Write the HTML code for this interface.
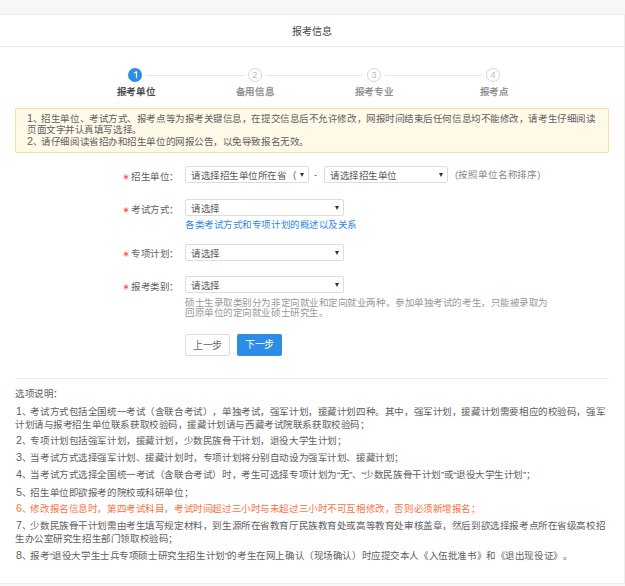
<!DOCTYPE html>
<html lang="zh-CN">
<head>
<meta charset="utf-8">
<style>
html,body{margin:0;padding:0;}
body{width:625px;height:586px;overflow:hidden;background:#f7f7f7;position:relative;font-family:"Liberation Sans",sans-serif;font-size:9.5px;letter-spacing:-0.45px;color:#555;text-spacing-trim:space-all;}
.o,.lab{color:#606060;}
.a{position:absolute;white-space:nowrap;line-height:12px;}
#panel{position:absolute;left:-1px;top:14px;width:626px;height:570px;background:#fff;border:1px solid #ededed;box-sizing:border-box;}
.hline{position:absolute;height:1px;background:#eaeaea;}
.circ{position:absolute;width:14px;height:14px;border-radius:50%;box-sizing:border-box;text-align:center;line-height:14px;font-size:10px;}
.c-on{background:#2d8ce6;color:#fff;}
.c-off{border:1px solid #d6d6d6;color:#bdbdbd;line-height:12px;font-size:9.5px;letter-spacing:0;}
.sline{position:absolute;height:1px;background:#e6e6e6;top:75px;}
.slab{position:absolute;top:85px;width:60px;text-align:center;color:#888;-webkit-text-stroke:0.25px #888;line-height:14px;}
#notice{position:absolute;left:15px;top:108px;width:594px;height:45px;box-sizing:border-box;background:#fff9e8;border:1px solid #fcdc9c;border-radius:2px;}
.sel{position:absolute;height:17px;box-sizing:border-box;border:1px solid #ddd;border-radius:2px;background:#fff;color:#5a5a5a;line-height:18px;padding-left:5px;overflow:hidden;white-space:nowrap;}
.arr{position:absolute;right:4.5px;top:5.5px;width:0;height:0;border-left:2.5px solid transparent;border-right:2.5px solid transparent;border-top:4px solid #333;}
.star{position:absolute;width:6px;height:6px;line-height:0;}
.lab{position:absolute;color:#606060;}
.btn{position:absolute;top:334px;height:22px;box-sizing:border-box;border-radius:2px;text-align:center;line-height:22px;font-size:10px;letter-spacing:-0.1px;}
.orange{color:#fa7242;}
.o{letter-spacing:-0.42px;}
.d{font-size:10.8px;letter-spacing:-0.4px;line-height:0;}
.p{letter-spacing:-1.25px;}
</style>
</head>
<body>
<div id="panel"></div>
<div class="hline" style="left:0;top:46px;width:624px;"></div>
<div class="a" style="left:292px;top:25px;font-size:10px;letter-spacing:0;color:#444;line-height:14px;">报考信息</div>

<!-- steps -->
<div class="circ c-on" style="left:128px;top:68px;"><svg width="14" height="14" viewBox="0 0 14 14" style="position:absolute;left:0;top:0"><path d="M8.5 3.4 V10.3 M8.5 3.6 L6.2 5.3" stroke="#fff" stroke-width="1.25" fill="none"/></svg></div>
<div class="sline" style="left:146px;width:97px;"></div>
<div class="circ c-off" style="left:248px;top:68px;">2</div>
<div class="sline" style="left:266px;width:96px;"></div>
<div class="circ c-off" style="left:367px;top:68px;">3</div>
<div class="sline" style="left:385px;width:97px;"></div>
<div class="circ c-off" style="left:486px;top:68px;">4</div>
<div class="slab" style="left:106px;color:#3a3a3a;-webkit-text-stroke:0.25px #3a3a3a;">报考单位</div>
<div class="slab" style="left:225px;">备用信息</div>
<div class="slab" style="left:344px;">报考专业</div>
<div class="slab" style="left:464px;">报考点</div>

<!-- notice -->
<div id="notice"></div>
<div class="a" style="left:27px;top:113px;color:#606060;"><span class="d">1</span><span class="p">、</span>招生单位、考试方式、报考点等为报考关键信息，在提交信息后不允许修改，网报时间结束后任何信息均不能修改，请考生仔细阅读</div>
<div class="a" style="left:27px;top:124px;color:#606060;">页面文字并认真填写选择。</div>
<div class="a" style="left:27px;top:136px;color:#606060;"><span class="d">2</span><span class="p">、</span>请仔细阅读省招办和招生单位的网报公告，以免导致报名无效。</div>

<!-- form -->
<div class="star" style="left:122.9px;top:173.8px;"><svg width="6" height="6" viewBox="0 0 6 6"><g stroke="#f00" stroke-width="0.65"><line x1="3" y1="0.3" x2="3" y2="5.7"/><line x1="0.66" y1="1.65" x2="5.34" y2="4.35"/><line x1="0.66" y1="4.35" x2="5.34" y2="1.65"/></g></svg></div>
<div class="lab a" style="left:131px;top:171px;">招生单位：</div>
<div class="sel" style="left:185px;top:166px;width:124px;">请选择招生单位所在省（<span class="arr"></span></div>
<div class="a" style="left:314px;top:169px;">-</div>
<div class="sel" style="left:324px;top:166px;width:124px;">请选择招生单位<span class="arr"></span></div>
<div class="a" style="left:455px;top:169px;color:#888;letter-spacing:-0.1px;">(按照单位名称排序)</div>

<div class="star" style="left:122.9px;top:206.9px;"><svg width="6" height="6" viewBox="0 0 6 6"><g stroke="#f00" stroke-width="0.65"><line x1="3" y1="0.3" x2="3" y2="5.7"/><line x1="0.66" y1="1.65" x2="5.34" y2="4.35"/><line x1="0.66" y1="4.35" x2="5.34" y2="1.65"/></g></svg></div>
<div class="lab a" style="left:131px;top:204px;">考试方式：</div>
<div class="sel" style="left:185px;top:199px;width:159px;">请选择<span class="arr"></span></div>
<div class="a" style="left:185px;top:219px;color:#2f88ec;">各类考试方式和专项计划的概述以及关系</div>

<div class="star" style="left:122.9px;top:251.3px;"><svg width="6" height="6" viewBox="0 0 6 6"><g stroke="#f00" stroke-width="0.65"><line x1="3" y1="0.3" x2="3" y2="5.7"/><line x1="0.66" y1="1.65" x2="5.34" y2="4.35"/><line x1="0.66" y1="4.35" x2="5.34" y2="1.65"/></g></svg></div>
<div class="lab a" style="left:131px;top:248px;">专项计划：</div>
<div class="sel" style="left:185px;top:244px;width:159px;">请选择<span class="arr"></span></div>

<div class="star" style="left:122.9px;top:284px;"><svg width="6" height="6" viewBox="0 0 6 6"><g stroke="#f00" stroke-width="0.65"><line x1="3" y1="0.3" x2="3" y2="5.7"/><line x1="0.66" y1="1.65" x2="5.34" y2="4.35"/><line x1="0.66" y1="4.35" x2="5.34" y2="1.65"/></g></svg></div>
<div class="lab a" style="left:131px;top:281px;">报考类别：</div>
<div class="sel" style="left:185px;top:276px;width:159px;">请选择<span class="arr"></span></div>
<div class="a" style="left:185px;top:297px;color:#999;">硕士生录取类别分为非定向就业和定向就业两种。参加单独考试的考生，只能被录取为</div>
<div class="a" style="left:185px;top:307px;color:#999;">回原单位的定向就业硕士研究生。</div>

<div class="btn" style="left:185px;width:45px;line-height:20px;padding-top:1px;border:1px solid #ddd;background:#fff;color:#666;">上一步</div>
<div class="btn" style="left:237px;width:45px;background:#2d8ce6;color:#fff;">下一步</div>

<!-- options -->
<div class="hline" style="left:15px;top:378px;width:594px;"></div>
<div class="a o" style="left:15px;top:388px;">选项说明：</div>
<div class="a o" style="left:16px;top:406px;"><span class="d">1</span><span class="p">、</span>考试方式包括全国统一考试（含联合考试），单独考试，强军计划，援藏计划四种。其中，强军计划，援藏计划需要相应的校验码，强军</div>
<div class="a o" style="left:15px;top:419px;">计划请与报考招生单位联系获取校验码，援藏计划请与西藏考试院联系获取校验码；</div>
<div class="a o" style="left:16px;top:435px;"><span class="d">2</span><span class="p">、</span>专项计划包括强军计划，援藏计划，少数民族骨干计划，退役大学生计划；</div>
<div class="a o" style="left:16px;top:452px;"><span class="d">3</span><span class="p">、</span>当考试方式选择强军计划、援藏计划时，专项计划将分别自动设为强军计划、援藏计划；</div>
<div class="a o" style="left:16px;top:469px;"><span class="d">4</span><span class="p">、</span>当考试方式选择全国统一考试（含联合考试）时，考生可选择专项计划为“无”、“少数民族骨干计划”或“退役大学生计划”；</div>
<div class="a o" style="left:16px;top:487px;"><span class="d">5</span><span class="p">、</span>招生单位即欲报考的院校或科研单位；</div>
<div class="a o orange" style="left:16px;top:503px;"><span class="d">6</span><span class="p">、</span>修改报名信息时，第四考试科目，考试时间超过三小时与未超过三小时不可互相修改，否则必须新增报名；</div>
<div class="a o" style="left:16px;top:520px;"><span class="d">7</span><span class="p">、</span>少数民族骨干计划需由考生填写规定材料，到生源所在省教育厅民族教育处或高等教育处审核盖章，然后到欲选择报考点所在省级高校招</div>
<div class="a o" style="left:15px;top:533px;">生办公室研究生招生部门领取校验码；</div>
<div class="a o" style="left:16px;top:550px;"><span class="d">8</span><span class="p">、</span>报考“退役大学生士兵专项硕士研究生招生计划”的考生在网上确认（现场确认）时应提交本人《入伍批准书》和《退出现役证》。</div>
</body>
</html>
